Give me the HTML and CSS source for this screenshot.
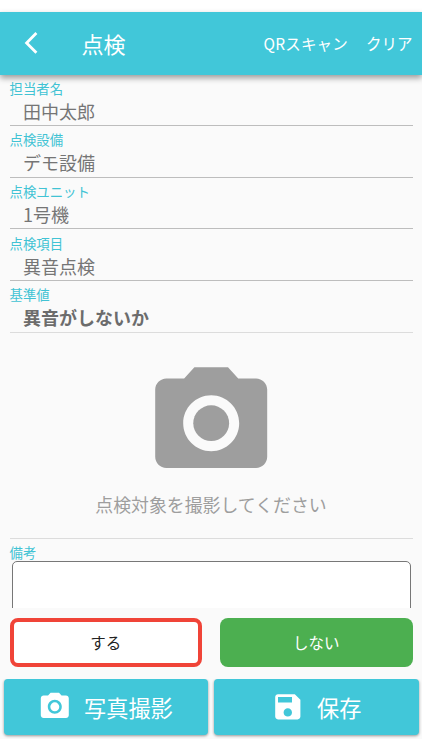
FILE: index.html
```html
<!DOCTYPE html>
<html lang="ja">
<head>
<meta charset="utf-8">
<title>点検</title>
<link rel="stylesheet" href="styles.css">
</head>
<body>
<div class="screen">
  <header class="bar">
    <svg class="back" viewBox="0 0 14 24"><path d="M12.4 2 2.6 12l9.8 9.8"/></svg>
    <h1 class="title">点検</h1>
    <span class="action scan">QRスキャン</span>
    <span class="action">クリア</span>
  </header>
  <main class="content">
    <div class="field"><div class="label">担当者名</div><div class="value">田中太郎</div></div>
    <div class="field"><div class="label">点検設備</div><div class="value">デモ設備</div></div>
    <div class="field"><div class="label">点検ユニット</div><div class="value">1号機</div></div>
    <div class="field"><div class="label">点検項目</div><div class="value">異音点検</div></div>
    <div class="field light"><div class="label">基準値</div><div class="value strong">異音がしないか</div></div>
    <div class="photo">
      <svg class="camera" viewBox="0 0 24 24"><circle cx="12" cy="12" r="3.2"/><path d="M9 2 7.17 4H4c-1.1 0-2 .9-2 2v12c0 1.1.9 2 2 2h16c1.1 0 2-.9 2-2V6c0-1.1-.9-2-2-2h-3.17L15 2H9zm3 15c-2.76 0-5-2.24-5-5s2.24-5 5-5 5 2.24 5 5-2.24 5-5 5z"/></svg>
      <p class="prompt">点検対象を撮影してください</p>
    </div>
    <div class="label note-label">備考</div>
    <div class="note"></div>
  </main>
  <div class="choices">
    <div class="choice selected">する</div>
    <div class="choice green">しない</div>
  </div>
  <footer class="footer">
    <div class="button">
      <svg class="icon" viewBox="0 0 24 24"><circle cx="12" cy="12" r="3.2"/><path d="M9 2 7.17 4H4c-1.1 0-2 .9-2 2v12c0 1.1.9 2 2 2h16c1.1 0 2-.9 2-2V6c0-1.1-.9-2-2-2h-3.17L15 2H9zm3 15c-2.76 0-5-2.24-5-5s2.24-5 5-5 5 2.24 5 5-2.24 5-5 5z"/></svg>
      <span>写真撮影</span>
    </div>
    <div class="button">
      <svg class="icon" viewBox="0 0 24 24"><path d="M17 3H5c-1.11 0-2 .9-2 2v14c0 1.1.89 2 2 2h14c1.1 0 2-.9 2-2V7l-4-4zm-5 16c-1.66 0-3-1.34-3-3s1.34-3 3-3 3 1.34 3 3-1.34 3-3 3zm3-10H5V5h10v4z"/></svg>
      <span>保存</span>
    </div>
  </footer>
</div>
</body>
</html>
```
FILE: styles.css
```css
* { box-sizing: border-box; }
body {
  margin: 0;
  background: #fff;
  font-family: "Noto Sans CJK JP", sans-serif;
}
.screen {
  height: 750px;
  padding-top: 11.5px;
  display: flex;
  flex-direction: column;
  overflow: hidden;
}
.bar {
  position: relative;
  flex: none;
  height: 63.5px;
  padding: 0 9.5px 0 24px;
  display: flex;
  align-items: center;
  background: #41c7d9;
  color: #fff;
  box-shadow: 0 3px 6px rgba(0, 0, 0, .38);
}
.back {
  width: 14px;
  height: 24px;
  fill: none;
  stroke: #fff;
  stroke-width: 2.8;
}
.title {
  margin: 0 auto 0 43.5px;
  font-size: 22px;
  font-weight: 400;
  line-height: 32px;
}
.action {
  margin-left: 18px;
  font-size: 15.5px;
  line-height: 24px;
}
.scan { letter-spacing: .2px; }
.content {
  flex: none;
  height: 533px;
  padding: 0 9.5px;
  background: #fafafa;
  overflow: hidden;
}
.field {
  height: 51.7px;
  padding-top: 3.4px;
  border-bottom: 1px solid #bdbdbd;
}
.field:first-child { height: 51px; padding-top: 3px; }
.light { border-color: #dcdcdc; }
.label {
  color: #41c3d4;
  font-size: 13.4px;
  line-height: 20px;
}
.value {
  padding-left: 13.5px;
  color: #757575;
  font-size: 18px;
  line-height: 26px;
}
.strong { font-weight: 700; color: #6c6c6c; }
.photo {
  height: 206px;
  padding-top: 23px;
  display: flex;
  flex-direction: column;
  align-items: center;
  border-bottom: 1px solid #dcdcdc;
}
.camera { width: 134.4px; height: 134.4px; fill: #9e9e9e; }
.prompt {
  margin: 1.2px 0 0;
  color: #9e9e9e;
  font-size: 17.9px;
  line-height: 26px;
}
.note-label { padding-top: 3px; height: 22.5px; }
.note {
  height: 80px;
  margin: 0 1.5px 0 2px;
  border: 1px solid #777;
  border-radius: 5px;
  background: #fff;
}
.choices {
  flex: none;
  height: 71px;
  padding: 9.5px 9.5px 12px;
  display: grid;
  grid-template-columns: 1fr 1fr;
  gap: 18px;
  background: #fafafa;
}
.choice {
  display: flex;
  align-items: center;
  justify-content: center;
  border-radius: 8px;
  font-size: 15.5px;
  color: #222;
}
.selected { background: #fff; border: 4.5px solid #f04438; }
.green { background: #4caf50; color: #fff; }
.footer {
  flex: none;
  height: 59.5px;
  padding: 0 3.5px 3.5px;
  display: grid;
  grid-template-columns: 1fr 1fr;
  gap: 6.5px;
  background: #fafafa;
  overflow: hidden;
}
.button {
  display: flex;
  align-items: center;
  justify-content: center;
  gap: 12px;
  border-radius: 4px;
  background: #41c7d9;
  color: #fff;
  font-size: 22.2px;
  box-shadow: 0 1px 3px rgba(0, 0, 0, .4);
}
.icon { width: 33.6px; height: 33.6px; fill: #fff; }
```
